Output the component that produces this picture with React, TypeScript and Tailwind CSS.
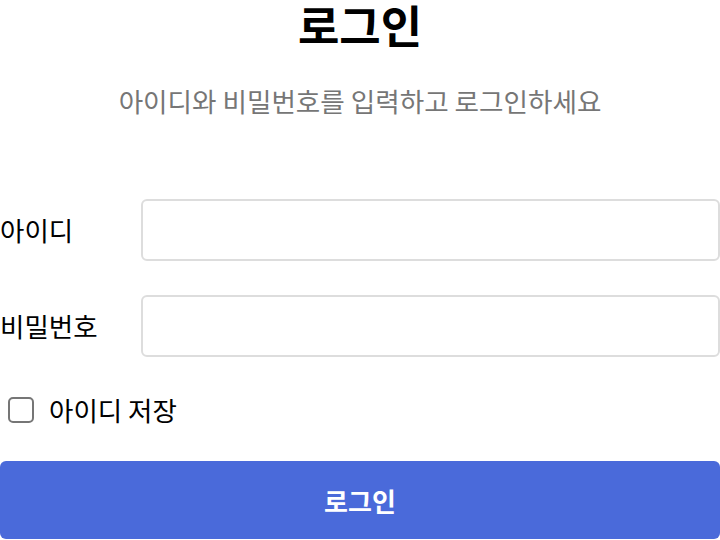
import React from "react";

export default function App() {
  const font = { fontFamily: '"Noto Sans CJK KR", "Noto Sans", sans-serif' };
  return (
    <div className="w-[720px] bg-white text-black" style={font}>
      <h1 className="text-center text-[45px] font-bold leading-[50px]">로그인</h1>
      <p className="mt-[33px] text-center text-[26.6px] leading-[36px] text-[#767676]">
        아이디와 비밀번호를 입력하고 로그인하세요
      </p>
      <div className="mt-[80px] flex flex-col">
        <div className="flex items-center">
          <label className="w-[141px] text-[26.5px] leading-[36px]">아이디</label>
          <input className="h-[62px] flex-1 rounded-[6px] border-2 border-[#dddddd] bg-white px-3 outline-none" />
        </div>
        <div className="mt-[34px] flex items-center">
          <label className="w-[141px] text-[26.5px] leading-[36px]">비밀번호</label>
          <input type="password" className="h-[62px] flex-1 rounded-[6px] border-2 border-[#dddddd] bg-white px-3 outline-none" />
        </div>
        <div className="mt-[40px] flex items-center pl-[8px]">
          <span className="h-[26px] w-[26px] rounded-[5px] border-2 border-[#767676] bg-white" />
          <span className="ml-[15px] text-[26.5px] leading-[26px]">아이디 저장</span>
        </div>
        <button className="mt-[38px] h-[78px] w-full rounded-[6px] bg-[#4a6ada] text-[26px] font-bold text-white">
          로그인
        </button>
      </div>
    </div>
  );
}
